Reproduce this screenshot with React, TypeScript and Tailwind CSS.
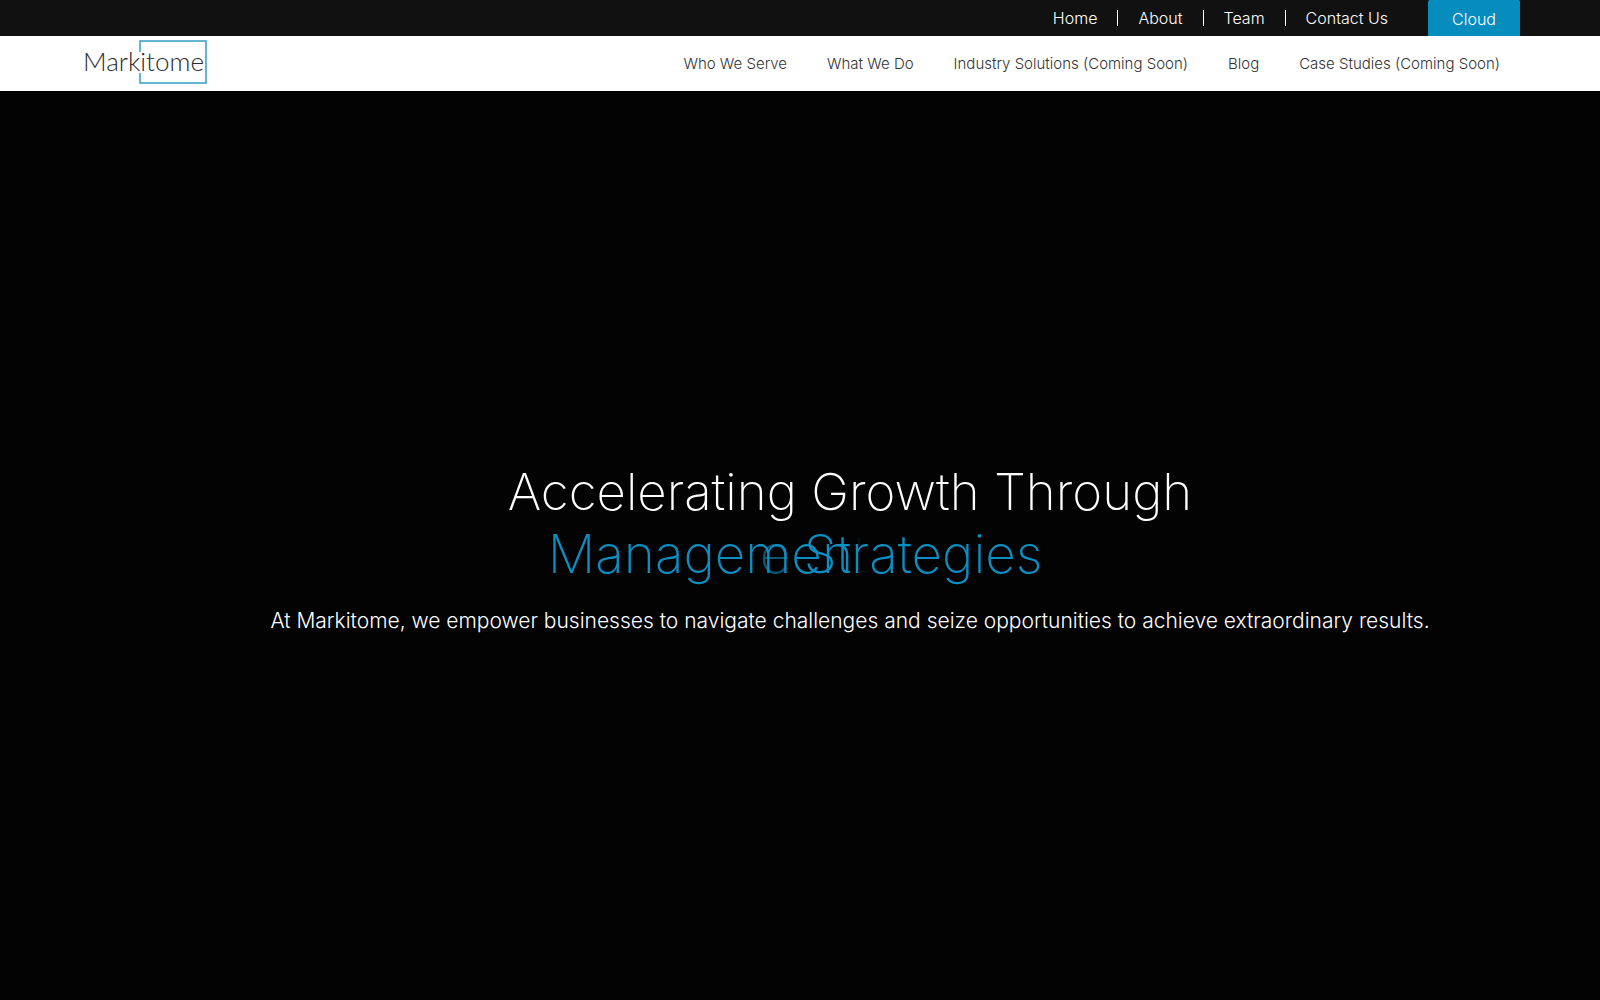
const topLinks = ['Home', 'About', 'Team', 'Contact Us'];

const mainLinks = [
  'Who We Serve',
  'What We Do',
  'Industry Solutions (Coming Soon)',
  'Blog',
  'Case Studies (Coming Soon)',
];

function Logo() {
  return (
    <svg width="124" height="46" viewBox="0 0 124 46" role="img" aria-label="Markitome">
      <path d="M56 13V2H122V44H56V34" fill="none" stroke="#2f9fc4" strokeWidth="1.5" />
      <text x="-1" y="32" fontSize="26" fontWeight="300" fill="#2b2b2b" fontFamily="Lato, sans-serif">Markitome</text>
    </svg>
  );
}

function TopBar() {
  return (
    <div className="h-9 bg-[#111111] px-20 flex justify-end items-center text-white text-base font-light">
      <nav aria-label="Secondary" className="flex items-center mr-5">
        {topLinks.map((label, i) => (
          <div key={label} className="flex items-center">
            {i > 0 && <span className="w-px h-4 bg-white" />}
            <a href="#" className="px-5">{label}</a>
          </div>
        ))}
      </nav>
      <a href="#" className="h-9 px-6 pt-0.5 flex items-center rounded-t-xs bg-[#068cbd]">Cloud</a>
    </div>
  );
}

function Header() {
  return (
    <header className="bg-white px-20 h-[55px] flex items-center justify-between">
      <a href="#" className="pl-1 -mt-1"><Logo /></a>
      <nav aria-label="Main" className="flex pt-0.5 text-[15px] font-light text-[#333333]">
        {mainLinks.map((label) => (
          <a key={label} href="#" className="px-5">{label}</a>
        ))}
      </nav>
    </header>
  );
}

function Hero() {
  return (
    <main className="flex-1 bg-[#030303] pl-25 pt-1.5 flex flex-col items-center justify-center text-center text-white">
      <h1 className="text-[51px] leading-[62px] font-extralight">
        Accelerating Growth Through
        <span className="relative block h-[62px] text-left text-[53px] text-[#0a8fc4]">
          <span className="absolute top-0 left-10">Managemen<span className="opacity-10">t</span></span>
          <span className="absolute top-0 left-63 opacity-60">e</span>
          <span className="absolute top-0 left-74">Strategies</span>
        </span>
      </h1>
      <p className="mt-5 text-[21px] leading-8 font-light">
        At Markitome, we empower businesses to navigate challenges and seize opportunities to achieve extraordinary results.
      </p>
    </main>
  );
}

export default function App() {
  return (
    <div className="min-h-screen flex flex-col font-[Inter,sans-serif]">
      <TopBar />
      <Header />
      <Hero />
    </div>
  );
}
